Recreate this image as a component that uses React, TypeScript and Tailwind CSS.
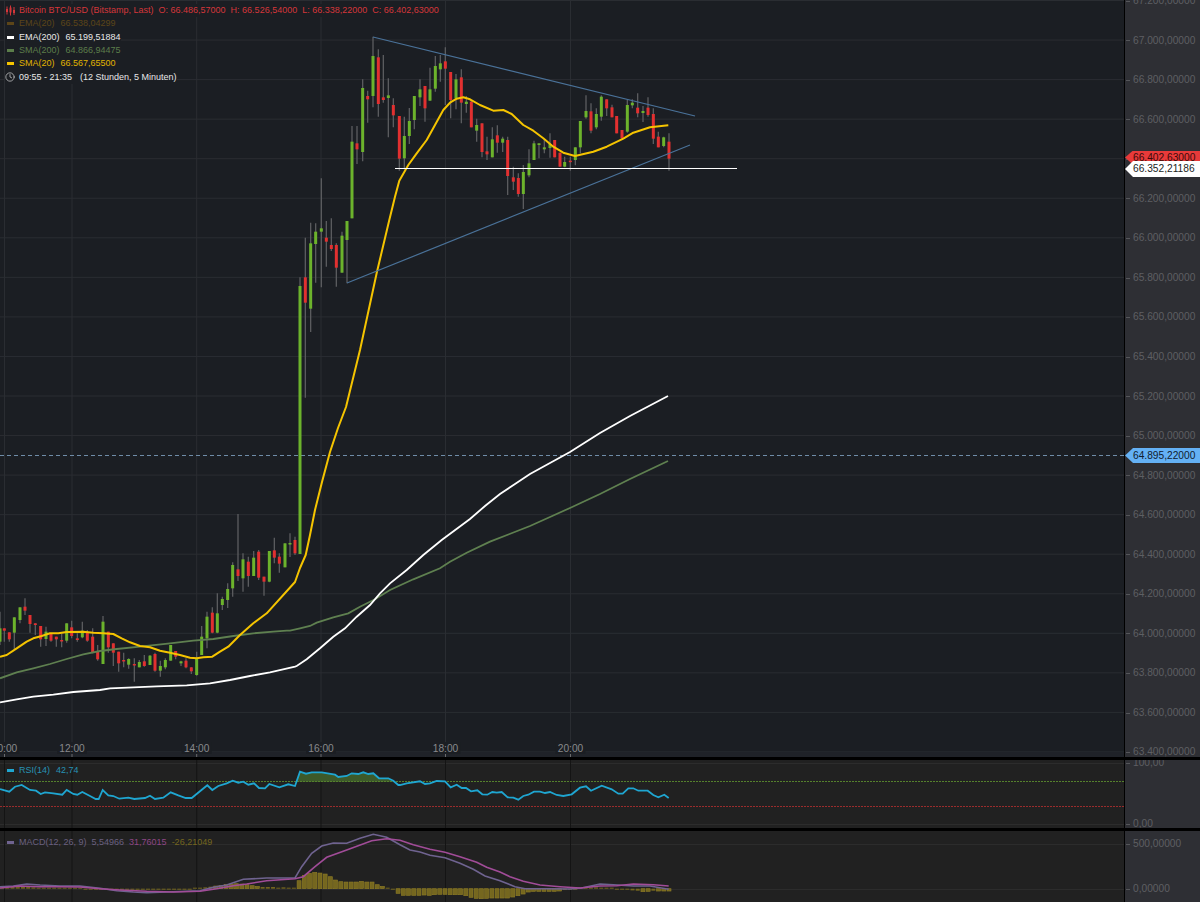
import React from 'react';
import { Clock } from 'lucide-react';

type Row = number[];

// points and candles are read off zoomed crops, so they keep the crop's origin
const crop = (ox: number, oy: number, pts: number[][]) => pts.map(([x, y]) => [ox + x / 3, oy + y / 3]);
const toLine = (pts: number[][]) => pts.map(([x, y]) => `${x.toFixed(1)},${y.toFixed(1)}`).join(' ');
const candleCrop = (ox: number, oy: number, rows: Row[]) =>
  rows.map(([x, wt, bt, bb, wb, up]) => ({
    x: ox + x / 3,
    wt: oy + wt / 3,
    bt: oy + bt / 3,
    bb: oy + bb / 3,
    wb: oy + wb / 3,
    up,
  }));

const candles = [
  ...candleCrop(0, 590, [
    [0, 65, 115, 155, 165, 1], [13, 115, 115, 122, 155, 0], [28, 127, 127, 148, 155, 0], [43, 82, 82, 128, 178, 1],
    [60, 52, 52, 90, 100, 1], [75, 25, 50, 62, 75, 0], [90, 75, 75, 102, 128, 0], [106, 100, 100, 105, 135, 0],
    [122, 108, 108, 148, 170, 0], [138, 110, 125, 147, 168, 1], [153, 130, 130, 152, 155, 0], [169, 140, 140, 148, 170, 0],
    [185, 130, 150, 153, 172, 0], [200, 100, 100, 152, 158, 1], [215, 92, 112, 138, 145, 0], [232, 130, 145, 150, 155, 0],
    [247, 95, 122, 142, 145, 1], [262, 120, 128, 152, 155, 0], [278, 115, 140, 188, 190, 0], [293, 165, 186, 208, 212, 0],
    [309, 78, 95, 222, 222, 1], [325, 125, 125, 172, 188, 0], [340, 160, 160, 188, 228, 0], [356, 185, 185, 220, 245, 0],
    [371, 188, 210, 214, 232, 0], [386, 205, 207, 224, 236, 1], [403, 205, 222, 225, 275, 0], [418, 210, 216, 232, 232, 1],
    [433, 195, 214, 228, 230, 0], [450, 195, 197, 225, 225, 1], [465, 188, 192, 242, 245, 0], [481, 212, 228, 242, 260, 1],
    [496, 205, 210, 232, 238, 1], [512, 165, 165, 212, 212, 1], [527, 183, 183, 200, 208, 0], [543, 212, 214, 220, 228, 1],
    [558, 205, 212, 232, 235, 0], [574, 232, 232, 244, 252, 0], [590, 185, 205, 255, 257, 1], [605, 108, 140, 195, 195, 1],
    [621, 65, 80, 145, 175, 1], [637, 52, 68, 128, 130, 0], [652, 10, 70, 128, 130, 1],
  ]),
  ...candleCrop(215, 505, [
    [22, 275, 282, 300, 315, 1], [38, 235, 252, 285, 309, 1], [53, 172, 180, 250, 275, 1], [69, 27, 193, 213, 228, 0],
    [84, 145, 163, 220, 260, 1], [100, 155, 170, 213, 245, 0], [116, 138, 158, 213, 213, 1], [131, 135, 140, 218, 225, 0],
    [147, 215, 215, 230, 272, 0], [163, 138, 138, 230, 232, 1], [178, 98, 136, 158, 175, 0], [193, 145, 155, 176, 203, 0],
    [210, 115, 115, 187, 187, 1], [225, 85, 114, 118, 156, 1], [240, 95, 105, 145, 150, 0],
  ]),
  ...candleCrop(280, 170, [
    [60, 322, 348, 1152, 1152, 1], [76, 203, 322, 398, 683, 0], [92, 158, 220, 416, 486, 1], [107, 160, 185, 222, 338, 1],
    [124, 25, 175, 185, 352, 1], [139, 153, 203, 215, 290, 0], [154, 145, 225, 237, 243, 0], [169, 220, 225, 293, 350, 0],
    [186, 185, 197, 308, 308, 1], [201, 153, 153, 210, 340, 1],
  ]),
  ...candleCrop(340, 20, [
    [36, 318, 365, 595, 595, 1], [51, 318, 370, 388, 432, 0], [68, 178, 204, 396, 424, 1], [83, 212, 228, 238, 308, 0],
    [99, 50, 108, 228, 262, 1], [115, 88, 112, 252, 290, 0], [130, 105, 232, 240, 248, 0], [145, 175, 226, 234, 352, 1],
    [160, 235, 255, 286, 322, 0], [178, 288, 288, 416, 452, 0], [193, 290, 348, 415, 448, 1], [208, 264, 303, 348, 372, 1],
    [223, 228, 228, 300, 328, 1], [240, 178, 208, 232, 258, 1], [255, 198, 198, 265, 305, 0], [270, 143, 208, 242, 242, 1],
    [286, 108, 138, 206, 215, 1], [301, 105, 130, 148, 185, 1], [316, 82, 124, 146, 255, 0], [332, 156, 156, 240, 295, 0],
    [348, 162, 178, 235, 268, 1], [364, 148, 172, 248, 310, 0], [379, 228, 245, 252, 278, 1], [394, 240, 245, 322, 322, 0],
    [410, 296, 315, 332, 365, 1], [426, 310, 310, 396, 412, 0], [441, 350, 394, 403, 420, 0], [457, 322, 358, 412, 412, 1],
    [472, 316, 346, 368, 398, 0], [488, 350, 356, 368, 396, 1], [503, 350, 360, 468, 525, 0], [520, 440, 472, 485, 510, 0],
    [535, 460, 474, 522, 530, 0], [550, 435, 456, 522, 567, 1], [567, 388, 430, 466, 472, 1], [582, 362, 370, 420, 418, 1],
    [597, 370, 370, 375, 415, 1], [613, 360, 382, 388, 400, 1], [630, 340, 372, 384, 413, 1], [644, 360, 360, 412, 412, 0],
    [660, 398, 398, 440, 440, 0], [674, 410, 426, 440, 442, 1], [691, 410, 422, 426, 452, 0], [706, 382, 382, 420, 436, 1],
    [721, 303, 303, 382, 400, 1], [738, 226, 273, 292, 296, 1], [753, 250, 274, 332, 340, 0], [769, 265, 282, 322, 328, 1],
    [784, 226, 230, 290, 302, 1], [800, 238, 238, 265, 288, 0], [816, 254, 262, 292, 292, 0], [830, 288, 288, 340, 340, 0],
    [846, 330, 330, 355, 360, 0], [862, 240, 255, 335, 338, 1], [877, 238, 248, 256, 265, 1], [893, 220, 263, 280, 292, 0],
    [909, 258, 273, 279, 306, 1], [924, 232, 263, 285, 290, 0], [940, 265, 282, 356, 372, 0], [955, 335, 350, 382, 382, 0],
    [971, 350, 352, 378, 382, 1], [987, 340, 365, 416, 452, 0],
  ]),
];

const sma20 = [
  ...crop(0, 590, [[0, 200], [20, 195], [50, 175], [80, 155], [100, 145], [125, 138], [150, 130], [175, 130], [200, 126], [250, 125], [280, 128], [310, 130], [340, 132], [365, 145], [390, 157], [420, 168], [450, 172], [480, 182], [510, 188], [540, 195], [570, 203], [590, 205], [610, 202], [637, 200], [660, 185], [685, 170], [720, 135], [760, 100], [800, 70]]),
  [295, 582], [300, 568], [305.7, 555], [310, 535], [315, 510], [322, 482], [330, 452], [338, 428], [346, 407], [360, 350], [376.7, 273],
  ...crop(340, 20, [[148, 600], [165, 530], [178, 482], [205, 435], [230, 400], [260, 360], [285, 315], [310, 270], [330, 248], [350, 236], [370, 232], [390, 238], [420, 255], [460, 272], [490, 270], [515, 282], [550, 315], [580, 332], [610, 355], [640, 380], [670, 398], [705, 408], [760, 395], [800, 380], [850, 356], [880, 338], [930, 322], [985, 316]]),
];

const sma200 = [
  ...crop(0, 590, [[0, 265], [50, 247], [100, 235], [150, 222], [200, 207], [250, 193], [300, 183], [350, 177], [420, 170], [510, 160], [580, 152], [640, 147], [700, 138], [760, 130], [820, 125], [860, 122]]),
  ...crop(290, 540, [[0, 272], [30, 265], [60, 258], [80, 248], [130, 232], [175, 220], [210, 200], [255, 178], [300, 150], [370, 118], [450, 85], [480, 65], [530, 38], [600, 5]]),
  [530, 526], [550, 517], [570, 508], [600, 494], [630, 479], [668, 461],
];

const ema200 = [
  ...crop(0, 590, [[0, 337], [50, 328], [100, 320], [160, 314], [220, 306], [300, 300], [330, 295], [400, 292], [470, 289], [560, 286], [630, 280], [690, 270], [750, 258], [810, 247], [885, 230]]),
  ...crop(290, 540, [[20, 378], [50, 358], [90, 325], [130, 290], [165, 265], [200, 230], [240, 195], [270, 160], [300, 130], [350, 90], [400, 45], [455, 0]]),
  [470, 519], [485, 506], [500, 494], [515, 484], [530, 474], [550, 463], [570, 452], [600, 433], [630, 416], [668, 396],
];

const rsiA = [[0, 117], [28, 125], [45, 110], [65, 105], [90, 120], [108, 122], [122, 132], [135, 127], [160, 130], [187, 134], [200, 120], [220, 132], [232, 134], [247, 126], [270, 138], [287, 147], [296, 147], [308, 120], [325, 136], [340, 138], [358, 146], [385, 143], [403, 147], [435, 144], [450, 137], [465, 147], [490, 143], [512, 127], [535, 136], [557, 144], [575, 144], [622, 106], [637, 120], [655, 108], [680, 100], [698, 92], [715, 98], [730, 95], [745, 104], [762, 100], [777, 114], [795, 115], [808, 102], [838, 112], [865, 103], [885, 108], [900, 65], [918, 71], [935, 67], [965, 67], [1005, 74], [1015, 81], [1040, 78], [1055, 70], [1075, 72], [1090, 67], [1105, 72], [1120, 70], [1137, 85], [1165, 85], [1180, 92], [1195, 105]];
const rsiB = [[0, 105], [20, 100], [60, 94], [75, 102], [90, 100], [110, 93], [135, 94], [152, 112], [170, 104], [185, 114], [198, 114], [213, 124], [232, 121], [247, 133], [262, 134], [277, 126], [290, 128], [305, 126], [323, 142], [340, 143], [355, 149], [370, 138], [385, 134], [402, 125], [420, 125], [435, 129], [450, 126], [470, 135], [490, 138], [515, 133], [540, 113], [558, 109], [573, 122], [605, 107], [635, 118], [655, 131], [668, 131], [685, 115], [700, 115], [715, 122], [743, 122], [760, 135], [775, 142], [793, 134], [806, 144]];
const rsi = [...crop(0, 750, rsiA), ...crop(400, 750, rsiB)];
const rsiFill = [
  ...crop(0, 750, [[888, 95]]),
  ...crop(0, 750, rsiA.filter(([x]) => x >= 900 && x <= 1165)),
  ...crop(0, 750, [[1180, 92], [1183, 95]]),
];

const macd = [
  ...crop(0, 750, [[0, 410], [40, 408], [80, 402], [120, 405], [180, 408], [240, 408], [300, 415], [350, 422], [400, 426], [440, 428], [500, 426], [600, 422], [640, 412], [680, 405], [730, 388], [800, 384], [885, 384], [905, 350], [935, 310], [965, 288], [1000, 279], [1040, 280], [1080, 265], [1120, 253], [1160, 262]]),
  ...crop(400, 750, [[0, 284], [30, 300], [60, 306], [90, 316], [135, 323], [180, 340], [220, 358], [255, 378], [300, 392], [345, 410], [375, 416], [440, 416], [510, 417], [545, 414], [600, 402], [640, 404], [700, 408], [750, 408], [806, 418]]),
];
const signal = [
  ...crop(0, 750, [[0, 414], [60, 408], [120, 410], [180, 410], [240, 411], [300, 416], [360, 420], [440, 424], [520, 426], [600, 424], [650, 416], [700, 407], [740, 402], [800, 392], [885, 386], [910, 380], [945, 350], [980, 322], [1040, 300], [1115, 272], [1160, 266]]),
  ...crop(400, 750, [[0, 271], [40, 284], [90, 298], [135, 307], [180, 320], [230, 337], [260, 352], [300, 366], [330, 380], [370, 394], [420, 405], [480, 410], [540, 414], [600, 408], [650, 407], [700, 402], [760, 404], [806, 408]]),
];

// histogram heights, one per candle, in crop units around the zero line
const hist = [
  -4, -4, -5, -5, -5, -5, -4, -3, -3, -2, -2, -2, -2, -1, -1, -1, 1, 1, 2, 3, 3, 2, 2, 1, 1, 1, 1, 1, 1, 1, 1, 1, 1, 1, 1, 1, 1, -1, -2,
  -4, -6, -8, -10, -13, -14, -15, -14, -12, -9, -7, -5, -5, -5, -3, -4, -3, -3,
  -24, -40, -46, -49, -47, -44, -36, -26, -21, -20, -20, -20, -22, -20, -20, -12, -7, -2, 0, 14,
  20, 20, 20, 20, 19, 20, 18, 17, 17, 18, 18, 18, 21, 26, 29, 30, 29, 28, 28, 28,
  28, 25, 21, 16, 10, 8, 8, 8, 8, 8, 7, 4, 2, 0, -1, -3, -4, -4, -3, -2, -1, 0, 1, 3, 5, 6, 9, 8, 6, 7, 7, 7,
];

const verticals = [4.5, 72, 196.7, 321, 445.5, 570.5];
const timeLabels = ['10:00', '12:00', '14:00', '16:00', '18:00', '20:00'];
const prices = [
  '67.200,00000', '67.000,00000', '66.800,00000', '66.600,00000', '66.400,00000', '66.200,00000', '66.000,00000',
  '65.800,00000', '65.600,00000', '65.400,00000', '65.200,00000', '65.000,00000', '64.800,00000', '64.600,00000',
  '64.400,00000', '64.200,00000', '64.000,00000', '63.800,00000', '63.600,00000', '63.400,00000',
];

const legend = [
  { name: 'EMA(20)', value: '66.538,04299', text: 'text-[#5c4518]', swatch: 'bg-[#5c4518]' },
  { name: 'EMA(200)', value: '65.199,51884', text: 'text-[#e8e8e8]', swatch: 'bg-white' },
  { name: 'SMA(200)', value: '64.866,94475', text: 'text-[#5b7d4a]', swatch: 'bg-[#5b7d4a]' },
  { name: 'SMA(20)', value: '66.567,65500', text: 'text-[#e0b400]', swatch: 'bg-[#f5c400]' },
];

const AxisLabel = ({ label, className }: { label: string; className: string }) => (
  <div className={`flex items-center ${className}`}>
    <div className="w-[4px] h-px bg-[#55565a] ml-px mr-[3px]"></div>
    <span>{label}</span>
  </div>
);

const App = () => {
  return (
    <div className="w-[1200px] h-[902px] flex flex-col overflow-hidden bg-black text-[10.2px] leading-none font-['Liberation_Sans',Arial,sans-serif]">
      {/* price pane */}
      <div className="h-[757px] flex shrink-0">
        <div className="relative w-[1124px] bg-[#1b1e23] overflow-hidden">
          <svg className="block" width="1124" height="757" viewBox="0 0 1124 757">
            {prices.map((_, i) => (
              <line key={i} x1="0" x2="1124" y1={0.5 + i * 39.55} y2={0.5 + i * 39.55} stroke="#2a2d32" />
            ))}
            {verticals.map((x) => (
              <line key={x} x1={x} x2={x} y1="0" y2="757" stroke="#2a2d32" />
            ))}
            <rect x="0" y="752" width="1124" height="5" fill="#1f2228" />
            {verticals.map((x, i) => (
              <g key={x}>
                <rect x={x - 15} y="742" width="30" height="12" fill="#1b1e23" />
                <line x1={x} x2={x} y1="754" y2="757" stroke="#6a6b6e" />
                <text x={x} y="751.5" textAnchor="middle" fill="#88898c" fontSize="10.2">{timeLabels[i]}</text>
              </g>
            ))}
            <line x1="0" x2="1124" y1="455.5" y2="455.5" stroke="#6f8ca8" strokeDasharray="4 3" />
            {candles.map((c, i) => (
              <g key={i}>
                <line x1={c.x} x2={c.x} y1={c.wt} y2={c.wb} stroke="#5c5d60" strokeWidth="1.3" />
                <rect x={c.x - 1.5} y={c.bt} width="3" height={Math.max(c.bb - c.bt, 1.5)} fill={c.up ? '#6cb32c' : '#e23030'} />
              </g>
            ))}
            <polyline points={toLine(sma200)} fill="none" stroke="#5f8050" strokeWidth="1.8" />
            <polyline points={toLine(ema200)} fill="none" stroke="#ffffff" strokeWidth="1.8" />
            <polyline points={toLine(sma20)} fill="none" stroke="#f5c400" strokeWidth="2" strokeLinejoin="round" />
            <line x1="373" y1="37" x2="695" y2="116" stroke="#4a7299" strokeWidth="1.2" />
            <line x1="347" y1="283" x2="690" y2="145" stroke="#4a7299" strokeWidth="1.2" />
            <line x1="395" y1="168.5" x2="737" y2="168.5" stroke="#ffffff" strokeWidth="1" />
          </svg>

          <div className="absolute left-[5px] top-[4px] flex flex-col items-start text-[9px]">
            <div className="h-[13.3px] flex items-center gap-[5px] text-[#d5363a] bg-[#1b1e23]">
              <svg width="11" height="11" viewBox="0 0 11 11" className="mr-[-2px]">
                <path d="M2 1.5v8M5.5 0.5v10M9 2v8" stroke="#d5363a" fill="none" />
                <path d="M1 4h2v3H1zM4.5 2.5h2v5h-2zM8 5h2v3H8z" fill="#d5363a" />
              </svg>
              <span>Bitcoin BTC/USD (Bitstamp, Last)</span>
              <span>O: 66.486,57000</span>
              <span>H: 66.526,54000</span>
              <span>L: 66.338,22000</span>
              <span>C: 66.402,63000</span>
            </div>
            {legend.map((item) => (
              <div key={item.name} className={`h-[13.3px] flex items-center bg-[#1b1e23] ${item.text}`}>
                <div className={`w-[7px] h-[3px] ml-[2px] mr-[5px] ${item.swatch}`}></div>
                <span className="mr-[6px]">{item.name}</span>
                <span>{item.value}</span>
              </div>
            ))}
            <div className="h-[13.3px] flex items-center text-[#e8e8e8] bg-[#1b1e23]">
              <Clock size={10} strokeWidth={1.5} className="mr-[4px]" />
              <span className="mr-[8px]">09:55 - 21:35</span>
              <span>(12 Stunden, 5 Minuten)</span>
            </div>
          </div>
        </div>

        <div className="relative w-[76px] bg-[#2e2f34] border-l border-black overflow-hidden text-[#5e5f63]">
          <div className="-mt-[18.6px] flex flex-col">
            {prices.map((p) => (
              <AxisLabel key={p} label={p} className="h-[39.55px] shrink-0" />
            ))}
          </div>
          <div className="absolute left-0 top-[150.5px] w-[76px] h-[14px] pl-[8px] pt-[2px] flex items-center bg-[#e83a3a] text-[#3b0a0a] [clip-path:polygon(0_50%,8px_0,100%_0,100%_100%,8px_100%)]">
            66.402,63000
          </div>
          <div className="absolute left-0 top-[161px] w-[76px] h-[16px] pl-[8px] flex items-center bg-white text-[#1b1e23] [clip-path:polygon(0_50%,8px_0,100%_0,100%_100%,8px_100%)]">
            66.352,21186
          </div>
          <div className="absolute left-0 top-[448px] w-[76px] h-[15px] pl-[8px] pt-px flex items-center bg-[#64b1f5] text-[#10202e] [clip-path:polygon(0_50%,8px_0,100%_0,100%_100%,8px_100%)]">
            64.895,22000
          </div>
        </div>
      </div>

      {/* RSI pane */}
      <div className="h-[68px] mt-[3px] flex shrink-0">
        <div className="relative w-[1124px] bg-[#212121] overflow-hidden">
          <svg className="block" width="1124" height="68" viewBox="0 760 1124 68">
            <line x1="0" x2="1124" y1="763.5" y2="763.5" stroke="#2c2c2c" />
            <line x1="0" x2="1124" y1="824.5" y2="824.5" stroke="#2c2c2c" />
            {verticals.map((x) => (
              <line key={x} x1={x} x2={x} y1="760" y2="828" stroke="#141414" />
            ))}
            <polygon points={toLine(rsiFill)} fill="#3d5a2a" />
            <line x1="0" x2="1124" y1="781.5" y2="781.5" stroke="#55802c" strokeDasharray="2 1" />
            <line x1="0" x2="1124" y1="806.5" y2="806.5" stroke="#9a2c2c" strokeDasharray="2 1" />
            <polyline points={toLine(rsi)} fill="none" stroke="#1fa6d1" strokeWidth="1.8" />
          </svg>
          <div className="absolute left-[7px] top-[4px] h-[13.3px] flex items-center text-[9px] text-[#2792b4]">
            <div className="w-[7px] h-[3px] mr-[5px] bg-[#1fa6d1]"></div>
            <span className="mr-[6px]">RSI(14)</span>
            <span>42,74</span>
          </div>
        </div>
        <div className="w-[76px] bg-[#2e2f34] border-l border-black overflow-hidden text-[#5e5f63]">
          <div className="-mt-[3px] flex flex-col gap-[48px]">
            <AxisLabel label="100,00" className="h-[13px]" />
            <AxisLabel label="0,00" className="h-[13px]" />
          </div>
        </div>
      </div>

      {/* MACD pane */}
      <div className="h-[71px] mt-[3px] flex shrink-0">
        <div className="relative w-[1124px] bg-[#212121] overflow-hidden">
          <svg className="block" width="1124" height="71" viewBox="0 831 1124 71">
            <line x1="0" x2="1124" y1="844.5" y2="844.5" stroke="#2c2c2c" />
            <line x1="0" x2="1124" y1="889.5" y2="889.5" stroke="#2c2c2c" />
            {verticals.map((x) => (
              <line key={x} x1={x} x2={x} y1="831" y2="902" stroke="#141414" />
            ))}
            {hist.map((v, k) => {
              const x = 669 - (128 - k) * 5.21;
              const h = Math.max(Math.abs(v) / 3, 1);
              return (
                <rect
                  key={k}
                  x={x - 2}
                  y={v < 0 ? 888.7 - h : 888.7}
                  width="4"
                  height={h}
                  fill="#75671f"
                  stroke={h > 2 ? '#8f7d25' : 'none'}
                  strokeWidth="0.6"
                />
              );
            })}
            <polyline points={toLine(macd)} fill="none" stroke="#6f6390" strokeWidth="1.6" />
            <polyline points={toLine(signal)} fill="none" stroke="#a14c98" strokeWidth="1.6" />
          </svg>
          <div className="absolute left-[7px] top-[5px] h-[13.3px] flex items-center text-[9px]">
            <div className="w-[7px] h-[3px] mr-[5px] bg-[#6f6390]"></div>
            <span className="mr-[5px] text-[#6a6080]">MACD(12, 26, 9)</span>
            <span className="mr-[5px] text-[#6a6080]">5,54966</span>
            <span className="mr-[5px] text-[#8e4686]">31,76015</span>
            <span className="text-[#75671f]">-26,21049</span>
          </div>
        </div>
        <div className="w-[76px] bg-[#2e2f34] border-l border-black overflow-hidden text-[#5e5f63]">
          <div className="mt-[6.5px] flex flex-col gap-[32px]">
            <AxisLabel label="500,00000" className="h-[13px]" />
            <AxisLabel label="0,00000" className="h-[13px]" />
          </div>
        </div>
      </div>
    </div>
  );
};

export default App;
